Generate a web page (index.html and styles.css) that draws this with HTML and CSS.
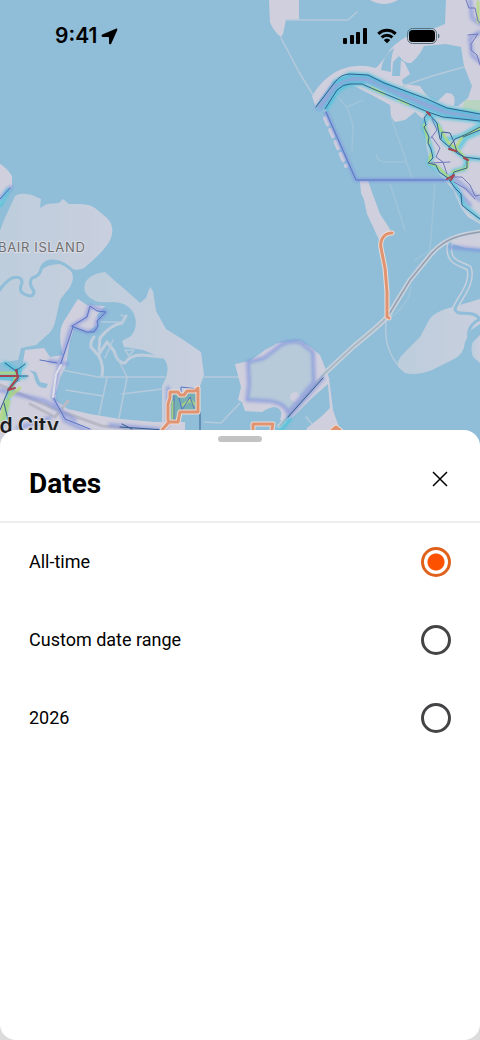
FILE: index.html
```html
<!DOCTYPE html>
<html lang="en">
<head>
    <meta charset="UTF-8">
    <meta name="viewport" content="width=device-width, initial-scale=1.0">
    <title>Dates</title>
    <link rel="stylesheet" href="styles.css">
</head>
<body>
    <div class="screen">
        <!-- Map -->
        <div class="map-area">
            <svg class="map" viewBox="0 0 480 450" preserveAspectRatio="xMidYMin slice" role="img" aria-label="Heatmap">
                <defs>
                    <filter id="glow" x="-20%" y="-20%" width="140%" height="140%">
                        <feGaussianBlur stdDeviation="1.500"/>
                    </filter>
                    <linearGradient id="marsh" x1="0" y1="0" x2="1" y2="0">
                        <stop offset="0" stop-color="#bccddc"/>
                        <stop offset="1" stop-color="#c9cfde"/>
                    </linearGradient>
                </defs>
                <rect class="water" width="480" height="450"/>

                <!-- Land, north east -->
                <path class="land" d="M269 0L270 22Q273 31 281 37L283 34L286 20L299 20V0ZM370 0Q384 8 398 0Z"/>
                <path class="land" d="M312 96Q324 76 342 69Q358 63 376 68Q380 64 386 56Q392 44 408 36L430 30L445 24L446 0H480V224L468 217L461 208L453 190L443 178L431 166L426 145L424 120L415 112L405 120L395 122L391 117L390 105L370 94L350 84L334 88L326 100L326 112L316 108Z"/>
                <path class="water" d="M399 56Q405 64 411 63Q418 58 424 46L446 44L461 47L464 66L472 86L468 98L458 106L454 106Q457 92 446 93L438 101Q428 100 420 86L403 84L402 80L410 74L405 63L401 60L400 76H392L393 62ZM381 70Q383 55 394 48Q390 60 391 72Z"/>
                <path class="park" d="M465 100H480V112H461Z"/>
                <path class="land" d="M360 181H368L380 214L388 226L392 233L384 235L379 240L374 229L367 214L364 200L361 193Z"/>
                <path class="trail" d="M281 38L299 72L313 95M286 20H348L357 12"/>
                <path class="trail faint" d="M335 94L347 107L363 100M347 107L353 125L352 151M376 155Q378 162 386 162H405M391 117L412 178M390 184L405 230M435 183L430 250L415 260"/>
                <path class="trail" d="M403 86L432 76L464 67"/>
                <path class="dash" d="M325 118L346 166"/>

                <!-- Land, east -->
                <path class="land" d="M447 242L480 232V249L466 248L456 245Z"/>
                <path class="marsh" d="M398 367Q396 361 404 353L420 337L428 322Q432 312 453 307L470 302L480 299V324L471 330L465 342Q464 355 452 360L432 370Q416 376 405 373Z"/>
                <path class="marsh" d="M480 333Q468 342 473 357L480 363Z"/>
                <path class="creek" d="M450 243C446 263 460 263 469 268C474 284 458 299 455 309C457 318 472 308 480 319"/>
                <path class="creek-water" d="M450 243C446 263 460 263 469 268C474 284 458 299 455 309C457 318 472 308 480 319C468 325 467 333 470 343L480 333"/>
                <path class="trail" d="M386 320C384 343 390 355 398 365"/>
                <path class="trail faint" d="M411 287Q410 303 390 318"/>

                <!-- Bair Island and the marshes -->
                <path class="marsh" d="M-8 252L4 220L15 196Q20 192 32 195L41 199L40 208L47 204L59 203L63 199L69 204L78 204Q90 204 95 208L107 218Q115 226 111 238Q107 249 84 268Q75 273 62 264Q50 259 42 266L38 274Q44 264 61 264Q73 268 73 278Q72 286 66 292L60 300L56 318Q54 330 46 336L36 345L21 348L18 360L-8 364Z"/>
                <path class="land" d="M-8 160Q4 164 12 176V187L4 200L-8 215Z"/>
                <path class="creek-water wide" d="M-4 296Q4 282 12 278Q22 275 22 283Q18 291 24 294Q34 299 34 291Q28 284 32 278Q40 276 41 269Q44 260 54 261Q64 262 74 272"/>
                <path class="marsh" d="M85 284Q88 274 105 272L115 281L128 292L140 303L146 298L150 287L153 291L156 311L166 329L182 339L201 352L204 375L199 389L190 391L180 418L162 425V386L166 378Q172 358 155 355L143 350L124 347L122 341L131 336Q139 326 134 314Q128 302 112 302Q94 304 87 295Q83 290 85 284Z"/>
                <path class="land" d="M78 299L87 305L105 306L97 315L98 324L88 332L74 327L68 353L66 369L55 394L68 409L90 414L120 419L155 422H185V450H0V380L20 382L25 350L44 348L50 357L63 355Q56 330 66 318L74 305Z"/>
                <path class="water" d="M75 328L92 333L94 343L100 355L101 367L107 376L160 378V421L124 418L92 412L68 409L55 400L60 378L66 366L70 340ZM28 370Q34 372 35 380Q38 389 46 388L48 384L40 382L36 372Z"/>
                <path class="trail wide" d="M94 337Q90 342 91 347L99 356Q104 366 102 376M126 316L122 323Q110 325 100 338L99 350M99 354L107 342L114 351Q118 364 125 363Q130 355 142 355L162 357"/>
                <path class="trail" d="M105 358L113 340M115 353L127 377M125 350H134L129 356ZM101 322H122L126 317L121 315M62 370L98 377H165M107 378L99 415M127 378L119 418M66 390L103 396M122 394L162 389M204 377H240"/>

                <!-- Land, south -->
                <path class="land" d="M235 364L250 361L265 350L278 343L300 341L313 349L320 355L326 370L329 378L333 410L340 430V450H300L307 428L322 416L330 408L328 384L313 397L290 420H280Q284 409 275 407Q270 407 262 412L245 411L242 402L238 400L241 387Z"/>
                <path class="pond" d="M248 362L264 358L282 344Q300 338 305 346L313 352L314 382L288 413Q284 402 267 401L247 400L249 385Z"/>
                <circle class="land" cx="295" cy="397" r="5"/>
                <path class="trail" d="M204 422L221 423L240 403M306 417L312 424"/>

                <!-- Bridge -->
                <path class="road-case" d="M480 232C460 235 446 238 432 253L410 280L388 316Q380 325 354 346L324 374L280 426"/>
                <path class="road-fill" d="M480 232C460 235 446 238 432 253L410 280L388 316Q380 325 354 346L324 374L280 426"/>
                <path class="road" d="M480 232C460 235 446 238 432 253L410 280L388 316"/>
                <path class="road gray" d="M30 404L55 417L68 401M0 385L60 411L102 426L150 430"/>

                <!-- Heat, cool layer -->
                <g class="heat-cool" filter="url(#glow)">
                    <path d="M356 180H450M326 112L356 180M317 108L335 83L352 76L370 79L420 101L450 113L480 118"/>
                    <path d="M248 362L264 358L282 344Q300 338 305 346L313 352L314 382L288 413Q284 402 267 401L247 400L249 385Z"/>
                    <path d="M72 326L86 318L90 306L106 312L97 321L96 330L87 332ZM71 328L58 370L53 397L65 421L105 439M0 390L45 401L75 420M50 361L67 364M323 378L288 418M450 247L480 250M470 0L472 18L480 24M480 32L470 38L472 55L480 62"/>
                    <path d="M0 199L11 187M18 428L50 418M110 425L165 430M168 388V425M455 188L470 205M454 178L480 200"/>
                </g>
                <path class="river" d="M320 107L336 85L352 79L368 79L424 104L447 112L480 118"/>
                <path class="river-mid" d="M320 107L336 85L352 79L368 79L424 104L447 112L480 118"/>

                <!-- Heat, warm layer -->
                <g class="heat-cyan" filter="url(#glow)">
                    <path d="M326 109L338 90L348 84L362 84L378 91L428 112L443 117L480 121M335 82L350 74L368 75L384 83L427 99L447 108L480 114"/>
                    <path d="M428 113L424 127L430 145L433 155L429 163L439 170L449 178L458 190L464 205L480 219M428 113L438 126L445 143L457 152L467 160L464 169L454 171L450 179M480 125L462 136L448 139M459 148L466 138L480 132M467 158L480 159"/>
                    <path d="M-5 377H25M15 376L7 402L3 425M15 376L25 364M5 363L17 371"/>
                    <path d="M278 433L290 419M0 205L8 190"/>
                </g>
                <path class="heat-green" d="M372 88L384 94M399 100L408 104M424 125L429 143M431 154L429 163L437 166L449 178M438 125L448 142L458 150L465 158M454 151L462 137L480 128M468 159L467 168L453 172M478 2V22M16 376L9 397L20 388M0 373H15"/>
                <path class="heat-green wide" d="M7 402L2 420"/>
                <path class="trace" d="M316 107L335 82Q341 74 350 74L368 75L384 83L427 99L447 108L480 114M325 109L337 90Q343 84 350 84L362 84L378 91L400 100L428 112L443 117L480 121"/>
                <path class="trace" d="M428 113L424 118L426 125L424 127L429 137L428 143L431 149L433 158L428 163L436 165L439 172L448 178L455 188L461 194L462 205L468 210L480 219M428 113L437 123L440 139L447 145L457 153L467 159L467 168L454 172L451 179M441 139L442 132L450 133L454 142L457 152M480 127L467 134L455 139L449 147M480 130L463 137M457 151L464 157L480 159"/>
                <path class="trace purple" d="M432 119L437 130L431 138M432 137L440 148L436 157L443 162L447 174M430 163L450 162M453 177L462 177L470 185L475 196L480 195M454 182L466 189L475 199M466 0L469 8H475L478 21L480 23M468 35L478 34L471 44V50L477 55L480 65"/>
                <path class="trace blue" d="M326 112L356 180H448M72 326L87 317L90 306L97 311L106 312L97 321L98 326L94 332L87 332ZM73 327L60 366M53 397L65 419L90 429M0 199L10 188M40 360L57 363"/>
                <path class="trace" d="M0 376H28M5 363L16 371L25 364M17 369L18 380L8 391L3 403L0 410M4 403L9 424M122 424L132 429M120 427L165 430M200 412V432M323 378L288 417"/>
                <path class="hot" d="M0 376H18M16 370L18 377L8 390L15 388M427 112L430 115M449 149L456 151M464 158L468 160M447 179L454 175L451 180"/>
                <path class="road pale" d="M53 397L56 374L61 365"/>

                <!-- Heat inside the orange loop -->
                <path class="loop-fill" d="M173 394L195 392L197 411L180 414L176 422H171L170 398Z"/>
                <path class="heat-green" d="M173 402V418M183 405L190 400L194 404"/>
                <path class="trace blue" d="M181 395V387L198 389M179 398L182 410L190 397L194 408M174 396V420"/>

                <!-- Segments -->
                <g class="segment-case">
                    <path d="M392 233Q385 233 382 239Q380 243 381 248L385 268L387 292V317L389 318"/>
                    <path d="M162 430L169 422H178L180 412H198V388L195 391H187L184 395H180L178 392H170L170 398L168 404V420L169 422"/>
                    <path d="M253 434V424H273L271 434M330 432L336 427L342 432"/>
                </g>
                <g class="segment">
                    <path d="M392 233Q385 233 382 239Q380 243 381 248L385 268L387 292V317L389 318"/>
                    <path d="M162 430L169 422H178L180 412H198V388L195 391H187L184 395H180L178 392H170L170 398L168 404V420L169 422"/>
                    <path d="M253 434V424H273L271 434M330 432L336 427L342 432"/>
                </g>

                <text class="label-area" x="-2" y="252">BAIR ISLAND</text>
                <text class="label-city" x="59" y="433">d City</text>
            </svg>

            <!-- Status bar -->
            <div class="status-bar">
                <div class="status-left">
                    <span class="time">9:41</span>
                    <svg class="location-icon" width="17" height="17" viewBox="0 0 17 17" aria-hidden="true">
                        <path d="M14.800 .7L1.300 6.500C0 7.100 .3 8.900 1.700 8.900H7.200C7.700 8.900 8 9.200 8 9.600V15C8 16.400 9.700 16.700 10.300 15.400L16.300 2.100C16.700 1 15.800 .3 14.800 .7Z"/>
                    </svg>
                </div>
                <div class="status-right">
                    <svg width="24" height="16" viewBox="0 0 24 16" aria-hidden="true">
                        <rect x="0" y="10" width="4" height="6" rx="1"/>
                        <rect x="7" y="7" width="4" height="9" rx="1"/>
                        <rect x="13" y="4" width="4" height="12" rx="1"/>
                        <rect x="20" y="0" width="4" height="16" rx="1"/>
                    </svg>
                    <svg width="20" height="16" viewBox="0 0 20 16" aria-hidden="true">
                        <path class="wifi" d="M1.300 5.800A12.500 12.500 0 0 1 18.700 5.800M4.600 9.300A7.800 7.800 0 0 1 15.400 9.300"/>
                        <path d="M10 15.200L6.700 12A4.800 4.800 0 0 1 13.300 12Z"/>
                    </svg>
                    <svg width="33" height="16" viewBox="0 0 33 16" aria-hidden="true">
                        <rect class="battery-case" x=".5" y=".5" width="29" height="15" rx="5"/>
                        <rect x="2" y="2" width="26" height="12" rx="3.500"/>
                        <path class="battery-tip" d="M31 5.500Q32.500 6.300 32.500 8T31 10.500Z"/>
                    </svg>
                </div>
            </div>
        </div>

        <!-- Bottom sheet -->
        <main class="sheet">
            <div class="handle"></div>
            <div class="sheet-header">
                <h1>Dates</h1>
                <button type="button" class="close-btn" aria-label="Close">
                    <svg width="16" height="16" viewBox="0 0 16 16" aria-hidden="true">
                        <path d="M1 1L15 15M15 1L1 15"/>
                    </svg>
                </button>
            </div>
            <form class="options">
                <label class="option" for="allTime">
                    <span>All-time</span>
                    <input type="radio" id="allTime" name="dates" checked>
                </label>
                <label class="option" for="customRange">
                    <span>Custom date range</span>
                    <input type="radio" id="customRange" name="dates">
                </label>
                <label class="option" for="year2026">
                    <span>2026</span>
                    <input type="radio" id="year2026" name="dates">
                </label>
            </form>
        </main>
    </div>
</body>
</html>
```
FILE: styles.css
```css
* {
    box-sizing: border-box;
}

body {
    margin: 0;
    font-family: Roboto, "Liberation Sans", sans-serif;
    color: #000;
    background-color: #dcdcdc;
}

.screen {
    display: flex;
    flex-direction: column;
    min-height: 100vh;
}

/* Map */
.map-area {
    display: grid;
    height: 450px;
    overflow: hidden;
}

.map,
.status-bar {
    grid-area: 1 / 1;
}

.map {
    width: 100%;
    height: 100%;
}

.map path {
    stroke-linejoin: round;
    stroke-linecap: round;
}

.map .water {
    fill: #90bed8;
}

.map .land {
    fill: #cfcfdd;
}

.map .marsh {
    fill: url(#marsh);
}

.map .pond {
    fill: #b7cad9;
}

.map .park {
    fill: #b8d3c0;
}

.map .trail,
.map .dash,
.map .creek,
.map .creek-water,
.map .road-case,
.map .road-fill,
.map .road,
.map .river,
.map .river-mid,
.map .heat-cool,
.map .heat-cyan,
.map .heat-green,
.map .trace,
.map .hot,
.map .segment,
.map .segment-case {
    fill: none;
}

.map .trail {
    stroke: #b5cadb;
    stroke-width: 1.5;
}

.map .faint {
    stroke: #9fc4da;
}

.map .trail.wide {
    stroke: #c0cddc;
    stroke-width: 3;
}

.map .dash {
    stroke: #cfcfdd;
    stroke-width: 4;
    stroke-dasharray: 7 6;
}

.map .creek {
    stroke: #c6cfdd;
    stroke-width: 6;
}

.map .creek-water {
    stroke: #90bed8;
    stroke-width: 3;
}

.map .road-case {
    stroke: #c9d2dc;
    stroke-width: 5;
}

.map .road-fill {
    stroke: #aab9c6;
    stroke-width: 2;
}

.map .road {
    stroke: #9095ab;
    stroke-width: 1;
}

.map .gray {
    stroke: #b9bac5;
    stroke-width: 3;
}

.map .pale {
    stroke: #dedfe8;
    stroke-width: 2;
}

.map .river {
    stroke: #82b6dc;
    stroke-width: 9;
}

.map .river-mid {
    stroke: #8fa9d8;
    stroke-width: 4;
}

.map .heat-cool {
    stroke: #7c8ddd;
    stroke-width: 4;
    opacity: 0.6;
}

.map .heat-cyan {
    stroke: #3cc6dc;
    stroke-width: 4;
    opacity: 0.75;
}

.map .heat-green {
    stroke: #b4dc70;
    stroke-width: 3;
    opacity: 0.7;
}

.map .heat-green.wide {
    stroke-width: 7;
}

.map .trace {
    stroke: #35608f;
    stroke-width: 1;
}

.map .blue {
    stroke: #5873c4;
}

.map .purple {
    stroke: #7278bd;
}

.map .hot {
    stroke: #a64452;
    stroke-width: 2;
}

.map .loop-fill {
    fill: #76afb4;
}

.map .segment-case {
    stroke: #ecdcd5;
    stroke-width: 5;
}

.map .segment {
    stroke: #e09370;
    stroke-width: 3;
}

.label-area,
.label-city {
    font-family: Inter, sans-serif;
    paint-order: stroke;
    stroke: #d9dce4;
    stroke-width: 2;
}

.label-area {
    font-size: 13px;
    font-weight: 400;
    letter-spacing: 0.05em;
    fill: #6f6f72;
}

.label-city {
    font-size: 21px;
    font-weight: 600;
    text-anchor: end;
    fill: #1c1d20;
}

/* Status bar */
.status-bar {
    display: flex;
    justify-content: space-between;
    align-items: center;
    align-self: start;
    height: 72px;
    padding: 0 40px 0 55px;
}

.status-left {
    display: flex;
    align-items: center;
    gap: 4px;
}

.status-right {
    display: flex;
    align-items: center;
    gap: 10px;
}

.time {
    font-family: Inter, sans-serif;
    font-size: 21px;
    font-weight: 600;
    line-height: 24px;
}

.wifi {
    fill: none;
    stroke: #000;
    stroke-width: 3;
}

.battery-case {
    fill: none;
    stroke: #56717f;
}

.battery-tip {
    fill: #56717f;
}

/* Bottom sheet */
.sheet {
    position: relative;
    flex: 1;
    margin-top: -20px;
    border-radius: 16px;
    background-color: #fff;
}

.handle {
    width: 44px;
    height: 6px;
    margin: 6px auto 0;
    border-radius: 3px;
    background-color: #c3c3c3;
}

.sheet-header {
    display: flex;
    justify-content: space-between;
    align-items: flex-start;
    height: 81px;
    padding: 24px 24px 0 29px;
    border-bottom: 2px solid #eee;
}

.sheet-header h1 {
    margin: 0;
    font-size: 28px;
    font-weight: 700;
    line-height: 36px;
}

.close-btn {
    display: flex;
    justify-content: center;
    align-items: center;
    width: 32px;
    height: 26px;
    padding: 0;
    border: none;
    background: none;
    cursor: pointer;
}

.close-btn path {
    stroke: #000;
    stroke-width: 1.5;
}

.option {
    display: flex;
    justify-content: space-between;
    align-items: center;
    height: 78px;
    padding: 0 29px;
    font-size: 18px;
    line-height: 24px;
    cursor: pointer;
}

.option input {
    appearance: none;
    width: 30px;
    height: 30px;
    margin: 0;
    border: 3px solid #444446;
    border-radius: 50%;
    cursor: pointer;
}

.option input:checked {
    border-color: #e0611c;
    background: radial-gradient(circle, #fc5200 8px, #fff 9px);
}
```
